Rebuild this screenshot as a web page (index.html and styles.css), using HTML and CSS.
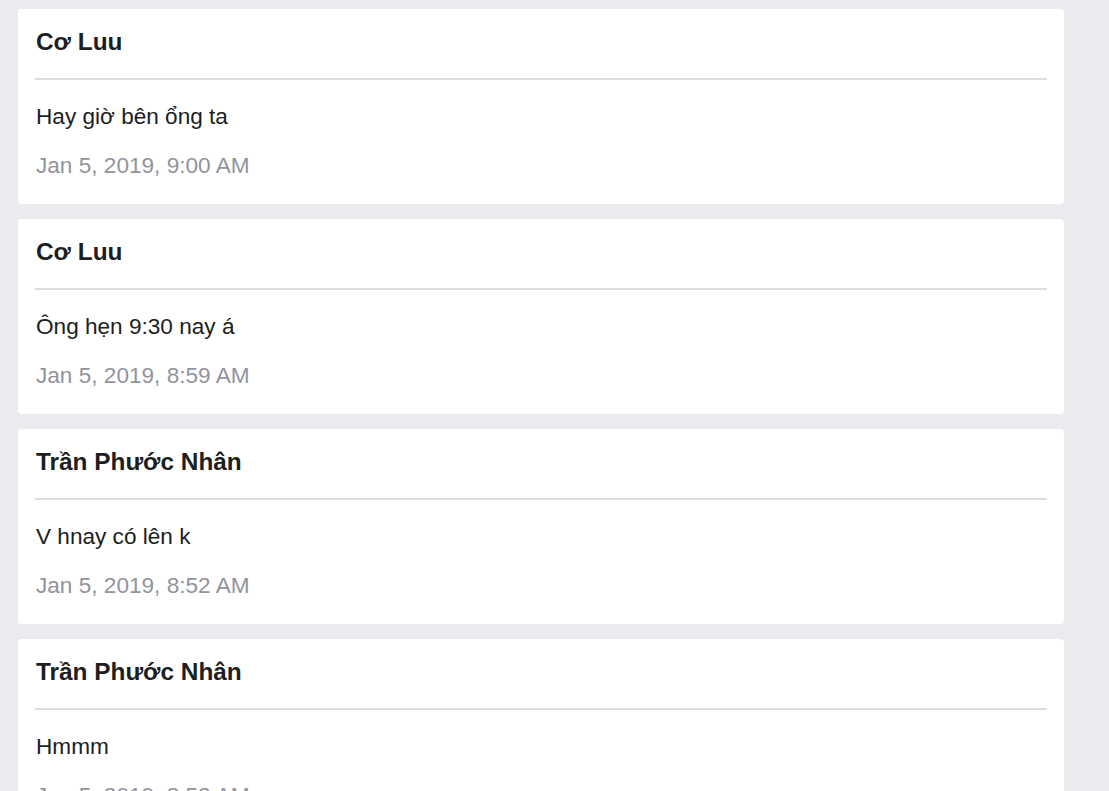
FILE: index.html
```html
<!DOCTYPE html>
<html lang="vi">
<head>
<meta charset="utf-8">
<title>Messages</title>
<link rel="stylesheet" href="styles.css">
</head>
<body>
<main class="list">
  <article class="card">
    <header class="card-head"><h2 class="name">Cơ Luu</h2></header>
    <p class="msg">Hay giờ bên ổng ta</p>
    <p class="date">Jan 5, 2019, 9:00 AM</p>
  </article>
  <article class="card">
    <header class="card-head"><h2 class="name">Cơ Luu</h2></header>
    <p class="msg">Ông hẹn 9:30 nay á</p>
    <p class="date">Jan 5, 2019, 8:59 AM</p>
  </article>
  <article class="card">
    <header class="card-head"><h2 class="name">Trần Phước Nhân</h2></header>
    <p class="msg">V hnay có lên k</p>
    <p class="date">Jan 5, 2019, 8:52 AM</p>
  </article>
  <article class="card">
    <header class="card-head"><h2 class="name">Trần Phước Nhân</h2></header>
    <p class="msg">Hmmm</p>
    <p class="date">Jan 5, 2019, 8:52 AM</p>
  </article>
</main>
</body>
</html>
```
FILE: styles.css
```css
html, body {
  margin: 0;
  padding: 0;
  background: #e9ebee;
  font-family: "Liberation Sans", Arial, sans-serif;
  color: #1c1e21;
  overflow: hidden;
}
.list {
  display: flex;
  flex-direction: column;
  gap: 15px;
  width: 1046px;
  padding: 9px 0 0 18px;
}
.card {
  background: #ffffff;
  border-radius: 4px;
  padding: 0 17px 25px 17px;
  height: 195px;
  box-sizing: border-box;
}
.card-head {
  padding-top: 18px;
  padding-bottom: 22px;
  border-bottom: 2px solid #dadde1;
}
.name {
  margin: 0;
  padding-left: 1px;
  font-size: 24.4px;
  font-weight: bold;
  line-height: 29px;
  height: 29px;
  color: #1c1e21;
}
.msg {
  margin: 24px 0 0 0;
  padding-left: 1px;
  font-size: 22.6px;
  line-height: 26px;
}
.date {
  margin: 23px 0 0 0;
  padding-left: 1px;
  font-size: 22.6px;
  line-height: 26px;
  color: #90949c;
}
```
